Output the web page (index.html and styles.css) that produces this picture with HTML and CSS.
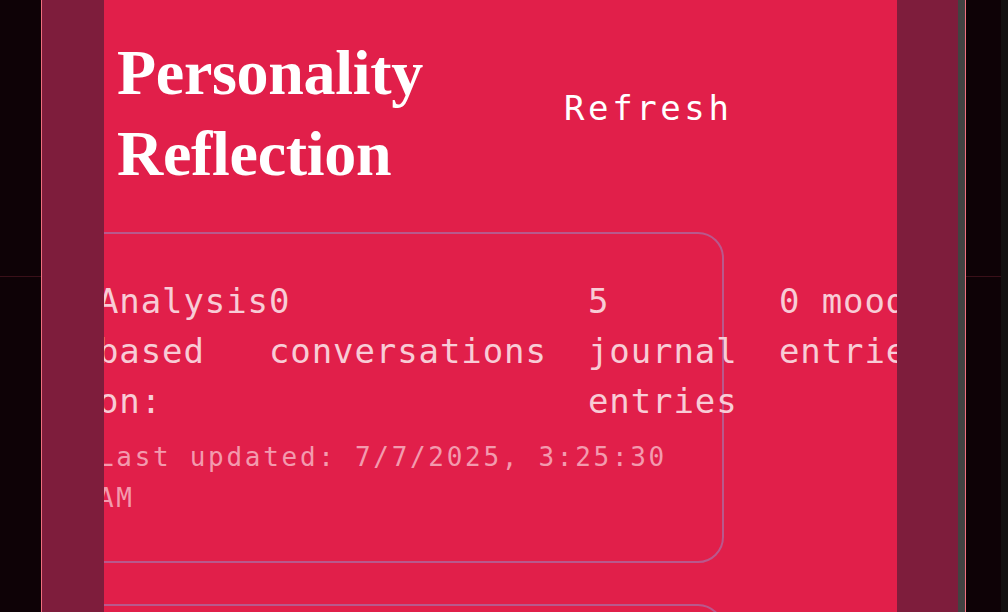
FILE: index.html
```html
<!DOCTYPE html>
<html lang="en">
<head>
<meta charset="utf-8">
<title>Personality Reflection</title>
<link rel="stylesheet" href="styles.css">
</head>
<body>
<div class="shell">
  <div class="gutter gutter-left"><div class="gutter-top"></div></div>
  <div class="frame">
    <div class="side"></div>
    <main class="main">
      <div class="page">
        <header class="header">
          <h1 class="title">Personality Reflection</h1>
          <button class="refresh" type="button">Refresh</button>
        </header>
        <section class="card">
          <div class="stats">
            <div class="stat stat-label">Analysis based on:</div>
            <div class="stat stat-conv">0 conversations</div>
            <div class="stat stat-journal">5 journal entries</div>
            <div class="stat stat-mood">0 mood entries</div>
          </div>
          <p class="updated">Last updated: 7/7/2025, 3:25:30 AM</p>
        </section>
        <section class="card card-next"></section>
      </div>
    </main>
    <div class="side"></div>
    <div class="scroll"></div>
  </div>
  <div class="gutter gutter-right"><div class="gutter-top"></div><div class="strip"></div></div>
</div>
</body>
</html>
```
FILE: styles.css
```css
* { box-sizing: border-box; }
html, body {
  margin: 0;
  padding: 0;
  background: #0e0206;
  height: 612px;
  overflow: hidden;
}
.shell {
  display: flex;
  height: 612px;
}
.gutter {
  position: relative;
  flex: 0 0 41px;
}
.gutter-right { flex: 0 0 42px; }
.gutter-top {
  height: 277px;
  border-bottom: 1px solid #3a1019;
}
.strip {
  position: absolute;
  top: 0;
  right: 0;
  width: 7px;
  height: 100%;
  background: #131010;
}
.frame {
  flex: 0 0 925px;
  display: flex;
  border-left: 1px solid #f0707f;
  border-right: 1px solid #f0707f;
  height: 612px;
}
.side {
  flex: 0 0 61px;
  background: #7e1d3c;
}
.frame > .side:first-child { flex-basis: 62px; }
.scroll {
  flex: 0 0 7px;
  background: #424242;
}
.main {
  flex: 0 0 793px;
  background: #e11f4a;
  overflow: hidden;
}
.page {
  margin-left: -49px;
  width: 900px;
}
.header {
  display: flex;
  align-items: center;
  padding: 32px 0 0 62px;
}
.title {
  margin: 0;
  width: 447px;
  font-family: "Liberation Serif", "DejaVu Serif", serif;
  font-weight: 700;
  font-size: 64px;
  line-height: 81px;
  color: #ffffff;
  letter-spacing: -0.3px;
}
.refresh {
  margin: -10px 0 0 0;
  padding: 0;
  border: 0;
  background: transparent;
  color: #ffffff;
  font-family: "DejaVu Sans Mono", "Liberation Mono", monospace;
  font-size: 34px;
  letter-spacing: 3.6px;
  line-height: 40px;
}
.card {
  margin-top: 38px;
  width: 669px;
  border: 2px solid #b9588c;
  border-radius: 26px;
  padding: 42px 42px 42px 42px;
  font-family: "DejaVu Sans Mono", "Liberation Mono", monospace;
}
.stats {
  display: flex;
  margin-left: -1px;
  font-size: 34px;
  line-height: 50px;
  letter-spacing: 0.9px;
  color: #f8ccd6;
}
.stat-label { flex: 0 0 170px; }
.stat-conv { flex: 0 0 319px; }
.stat-journal { flex: 0 0 191px; }
.stat-mood { flex: 0 0 180px; }
.updated {
  margin: 11px 0 0 -1px;
  font-size: 26px;
  line-height: 41px;
  letter-spacing: 2.7px;
  color: #f39aae;
}
.card-next {
  margin-top: 41px;
  height: 200px;
  padding: 0;
}
```
